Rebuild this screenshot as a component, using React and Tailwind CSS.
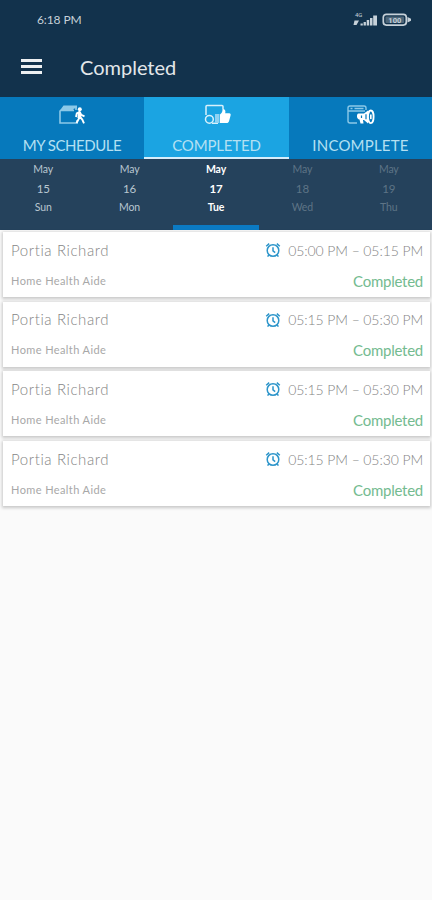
import React from "react";

function WalkIcon() {
  return (
    <svg width="28" height="22" viewBox="0 0 28 22" fill="none">
      <path d="M2 6.500V19h17v-3M2 6.500h14M18 2v4" stroke="#8cc9e8" strokeWidth="1.600" />
      <path d="M1.500 7 5.500 1.500H19v3h-3L14.500 7Z" fill="#8cc9e8" />
      <circle cx="21.800" cy="5.300" r="2" fill="#fff" />
      <path d="m18 13 .8-3.500 2.700-1.400 1.700 2.700 3.300 1.600M21.500 8v5.500L18.500 19M22 13l2.300 2.500 1.700 3.800" stroke="#fff" strokeWidth="1.900" />
      <path d="M20 7.700h3l.5 6.300h-4Z" fill="#fff" />
    </svg>
  );
}

function ThumbIcon() {
  return (
    <svg width="28" height="22" viewBox="0 0 28 22" fill="none">
      <path d="M3 11V2.500a1 1 0 0 1 1-1h15a1 1 0 0 1 1 1V5M9 19.200h6" stroke="#d8f0fb" strokeWidth="1.500" />
      <circle cx="6.400" cy="15.300" r="3.900" stroke="#d8f0fb" strokeWidth="1.500" />
      <path d="M12 10h4.500v9H12Z" fill="#8fd2f3" />
      <path d="M17 10.500c2-1.500 2.500-3 2.500-5.500 2.600-.6 3.400 2 2.700 4.200h4c1.400 0 1.800 1.300 1.300 2.500l-1.500 5.500c-.4 1.200-1.200 1.800-2.200 1.800H17Z" fill="#fff" />
    </svg>
  );
}

function MegaphoneIcon() {
  return (
    <svg width="29" height="22" viewBox="0 0 29 22" fill="none">
      <path d="M11 19H4a2 2 0 0 1-2-2V4a2 2 0 0 1 2-2h14a2 2 0 0 1 2 2v2M2 7h17M4.500 4.500h2m2 0h9" stroke="#8cc9e8" strokeWidth="1.400" />
      <path d="M12.500 9.500h5.500l4-3v13L18 16h-1l.5 3.500h-3L13.500 15.500c-3 0-3.300-5.800-1-6Z" fill="#fff" />
      <ellipse cx="24.800" cy="12.800" rx="2.800" ry="6.300" stroke="#fff" strokeWidth="1.800" />
      <path d="M24.800 10.500v4.600" stroke="#fff" strokeWidth="1.700" />
      <path d="M15.500 11.500v2.500M20 10.300v5" stroke="#0679bc" strokeWidth="1.200" />
    </svg>
  );
}

function AlarmIcon() {
  return (
    <svg width="16" height="16" viewBox="0 0 16 16" fill="none" stroke="#2d95ca" strokeWidth="1.500">
      <circle cx="8" cy="8.500" r="5.800" />
      <path d="M8 5.300v3.500l2.200 1.800M1.200 4.200 4.200 1.600M14.800 4.200l-3-2.600M3.800 13l-1.200 1.600M12.200 13l1.200 1.600" />
    </svg>
  );
}

function StatusIcons() {
  return (
    <svg width="60" height="20" viewBox="0 0 60 20" fill="#c6d1d9">
      <text x="3" y="6.500" fontSize="6" fontFamily="Roboto, sans-serif">4G</text>
      <path d="M2.500 10.500H7L4.500 15H1.500ZM8.500 13.500h2.300v2H8.500ZM11.600 12h2.300v3.500h-2.300ZM14.700 10h2.500v5.500h-2.500ZM18 8h2.500v7.500H18ZM21.200 5.500H25v10h-3.800Z" />
      <rect x="31.300" y="4.300" width="23" height="10.800" rx="3" fill="none" stroke="#c6d1d9" strokeWidth="1.700" />
      <rect x="33.500" y="6.500" width="18.600" height="6.500" rx="1" fill="#4d6679" />
      <path d="M55.500 7 59 8.800v2l-3.500 1.800Z" />
      <text x="42.800" y="12.500" textAnchor="middle" fontSize="7.500" fontWeight="700" fontFamily="Roboto, sans-serif">100</text>
    </svg>
  );
}

const tabs = [
  { label: "MY SCHEDULE", Icon: WalkIcon, style: "tracking-[-0.45px]" },
  { label: "COMPLETED", Icon: ThumbIcon, style: "tracking-[-0.15px]", active: true },
  { label: "INCOMPLETE", Icon: MegaphoneIcon, style: "tracking-[0.2px]" },
];

const days = [
  ["15", "Sun", "text-[#b9c6d0]"],
  ["16", "Mon", "text-[#b9c6d0]"],
  ["17", "Tue", "text-white font-bold"],
  ["18", "Wed", "text-[#5e7486]"],
  ["19", "Thu", "text-[#5e7486]"],
];

const visits = ["05:00 PM – 05:15 PM", "05:15 PM – 05:30 PM", "05:15 PM – 05:30 PM", "05:15 PM – 05:30 PM"];

export default function App() {
  return (
    <div className="h-[900px] w-[432px] overflow-hidden bg-[#fafafa] font-['Lato',sans-serif]">
      <header className="h-[97px] bg-[#12324c]">
        <div className="flex h-[39px] items-center justify-between pl-[37px] pr-[20px] text-[#c6d1d9]">
          <span className="text-[12px] leading-4 tracking-[-0.1px]">6:18 PM</span>
          <StatusIcons />
        </div>
        <div className="flex h-[55px] items-center pl-[21px]">
          <div className="flex w-[59px] flex-col gap-[3px]">
            <span className="h-[3px] w-[21px] bg-[#edf0f2]" />
            <span className="h-[3px] w-[21px] bg-[#edf0f2]" />
            <span className="h-[3px] w-[21px] bg-[#edf0f2]" />
          </div>
          <h1 className="text-[20px] leading-6 text-[#e3e7ea]">Completed</h1>
        </div>
      </header>

      <nav className="grid h-[62px] grid-cols-[144px_145px_143px]">
        {tabs.map(({ label, Icon, style, active }) => (
          <div
            key={label}
            className={`flex flex-col items-center border-b-2 pt-[7px] ${active ? "border-[#d6eefb] bg-[#1ba4e2]" : "border-[#0679bc] bg-[#0679bc]"}`}
          >
            <Icon />
            <span className={`mt-[9px] whitespace-nowrap text-[15px] leading-5 text-[#b4e0f2] ${style}`}>{label}</span>
          </div>
        ))}
      </nav>

      <section className="grid h-[71px] grid-cols-5 bg-[#25425c]">
        {days.map(([date, day, style]) => (
          <div
            key={date}
            className={`flex flex-col items-center border-b-[5px] pt-[1px] text-[10.5px] leading-[19px] tracking-[-0.1px] ${style} ${date === "17" ? "border-[#0b7ac3]" : "border-transparent"}`}
          >
            <span>May</span>
            <span className="text-[11.5px]">{date}</span>
            <span>{day}</span>
          </div>
        ))}
      </section>

      <main className="flex flex-col gap-[4.7px] pl-[3px] pr-[2px] pt-[2px]">
        {visits.map((time, i) => (
          <article key={i} className="flex h-[65px] flex-col bg-white pl-2 pr-[7px] pt-[8px] shadow-[0_1px_3px_1px_rgba(0,0,0,0.2)]">
            <div className="flex h-5 items-center justify-between text-[#858585]">
              <span className="text-[15px] font-light tracking-[0.6px]">Portia Richard</span>
              <span className="flex items-center gap-[7px]">
                <AlarmIcon />
                <span className="whitespace-nowrap text-[14px] font-light tracking-[-0.1px]">{time}</span>
              </span>
            </div>
            <div className="mt-[11px] flex h-5 items-center justify-between">
              <span className="text-[11px] tracking-[0.4px] text-[#a8a8a8]">Home Health Aide</span>
              <span className="text-[15px] tracking-[-0.25px] text-[#74bb90]">Completed</span>
            </div>
          </article>
        ))}
      </main>
    </div>
  );
}
